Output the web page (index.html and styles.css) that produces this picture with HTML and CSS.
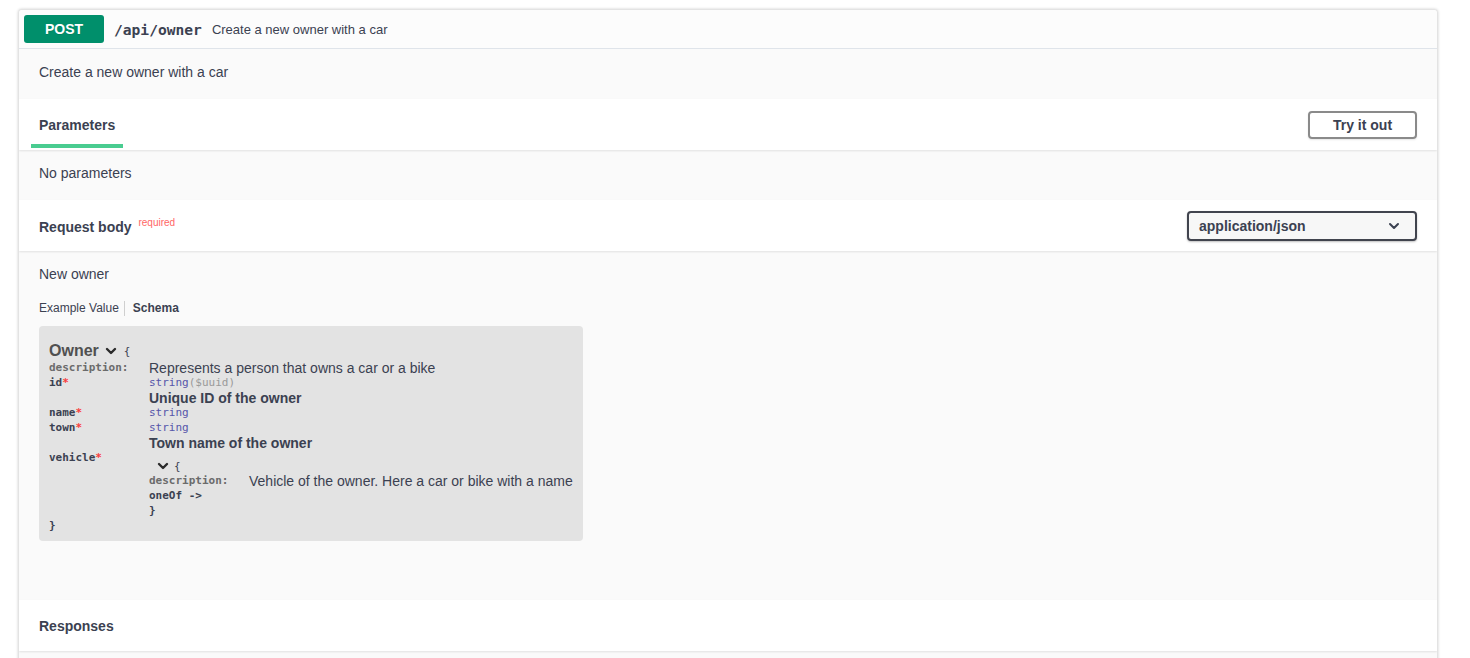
FILE: index.html
```html
<!DOCTYPE html>
<html lang="en">
<head>
<meta charset="utf-8">
<title>POST /api/owner</title>
<link rel="stylesheet" href="styles.css">
</head>
<body>
<div class="opblock">
  <div class="summary">
    <span class="method">POST</span>
    <span class="path">/api/owner</span>
    <span class="summary-desc">Create a new owner with a car</span>
  </div>

  <div class="section-body desc-wrap">
    <p>Create a new owner with a car</p>
  </div>

  <div class="section-header">
    <div class="tab-item">Parameters</div>
    <button class="btn-try">Try it out</button>
  </div>
  <div class="section-body params-body">
    <p>No parameters</p>
  </div>

  <div class="section-header">
    <div class="header-title">Request body <span class="required">required</span></div>
    <div class="select">
      <span>application/json</span>
      <svg class="select-chev" width="14" height="14" viewBox="0 0 14 14"><polyline points="3,5 7,9 11,5" fill="none" stroke="#3b4151" stroke-width="2" stroke-linecap="round" stroke-linejoin="round"/></svg>
    </div>
  </div>
  <div class="section-body request-body">
    <p class="body-desc">New owner</p>
    <div class="example-tabs">
      <span class="tab-link">Example Value</span>
      <span class="tab-sep"></span>
      <span class="tab-link active">Schema</span>
    </div>
    <div class="model-box">
      <div class="title-line">
        <span class="model-title">Owner</span>
        <svg class="chev" width="12" height="12" viewBox="0 0 12 12"><polyline points="2,4 6,8 10,4" fill="none" stroke="#2b2b2b" stroke-width="2.4" stroke-linecap="round" stroke-linejoin="round"/></svg>
        <span class="brace">{</span>
      </div>
      <div class="prop-row">
        <div class="prop-name muted">description:</div>
        <div class="prop-val"><div class="text">Represents a person that owns a car or a bike</div></div>
      </div>
      <div class="prop-row">
        <div class="prop-name">id<span class="star">*</span></div>
        <div class="prop-val">
          <div class="mono-line"><span class="type">string</span><span class="fmt">($uuid)</span></div>
          <div class="text strong">Unique ID of the owner</div>
        </div>
      </div>
      <div class="prop-row">
        <div class="prop-name">name<span class="star">*</span></div>
        <div class="prop-val"><div class="mono-line"><span class="type">string</span></div></div>
      </div>
      <div class="prop-row">
        <div class="prop-name">town<span class="star">*</span></div>
        <div class="prop-val">
          <div class="mono-line"><span class="type">string</span></div>
          <div class="text strong">Town name of the owner</div>
        </div>
      </div>
      <div class="prop-row">
        <div class="prop-name">vehicle<span class="star">*</span></div>
        <div class="prop-val nested">
          <div class="nested-title">
            <svg class="chev" width="12" height="12" viewBox="0 0 12 12"><polyline points="2,4 6,8 10,4" fill="none" stroke="#2b2b2b" stroke-width="2.4" stroke-linecap="round" stroke-linejoin="round"/></svg>
            <span class="brace">{</span>
          </div>
          <div class="prop-row">
            <div class="prop-name muted">description:</div>
            <div class="prop-val"><div class="text">Vehicle of the owner. Here a car or bike with a name</div></div>
          </div>
          <div class="mono-line">oneOf -&gt;</div>
          <div class="mono-line">}</div>
        </div>
      </div>
      <div class="mono-line close">}</div>
    </div>
  </div>

  <div class="section-header">
    <div class="header-title">Responses</div>
  </div>
  <div class="section-body tail"></div>
</div>
</body>
</html>
```

FILE: styles.css
```css
* { box-sizing: border-box; }

html, body {
  margin: 0;
  background: #fff;
}

body {
  padding: 9px 32px 0 18px;
  font-family: "Liberation Sans", Arial, sans-serif;
  color: #3b4151;
}

p { margin: 0; }

.opblock {
  border: 1px solid #e3e3e3;
  border-radius: 4px;
  box-shadow: 0 0 3px rgba(0, 0, 0, 0.19);
  background: #fafafa;
  overflow: hidden;
}

.summary {
  display: flex;
  align-items: center;
  padding: 5px;
  border-bottom: 1px solid #dfe4ea;
  background: #fcfcfc;
}

.method {
  min-width: 80px;
  height: 28px;
  display: flex;
  align-items: center;
  justify-content: center;
  background: #008f6b;
  color: #fff;
  font-weight: 700;
  font-size: 14px;
  border-radius: 3px;
  text-shadow: 0 1px 0 rgba(0, 0, 0, 0.1);
}

.path {
  font-family: "DejaVu Sans Mono", "Liberation Mono", monospace;
  font-weight: 700;
  font-size: 14.6px;
  color: #3b4151;
  padding: 0 10px;
}

.summary-desc {
  font-size: 13px;
  color: #3b4151;
}

.section-body {
  background: #fafafa;
  font-size: 14px;
  line-height: 17px;
}

.desc-wrap {
  padding: 15px 20px 18px;
}

.params-body {
  padding: 15px 20px 18px;
}

.section-header {
  display: flex;
  align-items: center;
  justify-content: space-between;
  height: 51px;
  padding: 0 20px 0 20px;
  background: #fff;
  box-shadow: 0 1px 2px rgba(0, 0, 0, 0.1);
  position: relative;
}

.section-header:has(.tab-item) {
  padding-left: 12px;
  align-items: stretch;
}

.tab-item {
  display: flex;
  align-items: center;
  padding: 7px 8px 0;
  margin-bottom: 2px;
  border-bottom: 4px solid #49cc90;
  font-size: 14px;
  font-weight: 700;
}

.btn-try {
  align-self: center;
  width: 109px;
  height: 28px;
  border: 2px solid #8a8a8a;
  border-radius: 4px;
  background: transparent;
  font-family: "Liberation Sans", Arial, sans-serif;
  font-size: 14px;
  font-weight: 700;
  color: #3b4151;
  box-shadow: 0 1px 2px rgba(0, 0, 0, 0.1);
}

.header-title {
  font-size: 14px;
  font-weight: 700;
}

.required {
  font-size: 10px;
  font-weight: 400;
  color: #ff6666;
  vertical-align: 6px;
  margin-left: 3px;
}

.select {
  width: 230px;
  height: 30px;
  display: flex;
  align-items: center;
  justify-content: space-between;
  padding: 0 14px 0 10px;
  border: 2px solid #41444e;
  border-radius: 4px;
  background: #f7f7f7;
  box-shadow: 0 1px 2px rgba(0, 0, 0, 0.25);
  font-size: 14px;
  font-weight: 700;
  color: #3b4151;
}

.request-body {
  padding: 15px 20px 59px;
}

.example-tabs {
  display: flex;
  align-items: center;
  margin-top: 18px;
  height: 15px;
  font-size: 12px;
}

.tab-sep {
  width: 1px;
  height: 15px;
  background: #cfcfcf;
  margin: 0 8px 0 5px;
}

.tab-link.active {
  font-weight: 700;
}

.model-box {
  margin-top: 10px;
  width: 544px;
  padding: 14px 10px 8px;
  background: #e3e3e3;
  border-radius: 4px;
}

.title-line {
  display: flex;
  align-items: center;
  height: 20px;
}

.model-title {
  font-size: 16px;
  font-weight: 700;
  color: #505050;
}

.chev {
  margin: 2px 0 0 6px;
}

.brace {
  font-family: "DejaVu Sans Mono", "Liberation Mono", monospace;
  font-size: 11px;
  margin-left: 7px;
  padding-top: 3px;
}

.prop-row {
  display: grid;
  grid-template-columns: 100px 1fr;
}

.prop-name {
  font-family: "DejaVu Sans Mono", "Liberation Mono", monospace;
  font-size: 11px;
  line-height: 15px;
  font-weight: 700;
  color: #3b4151;
}

.prop-name.muted {
  color: #6b6b6b;
}

.star {
  color: #f93e3e;
}

.mono-line {
  font-family: "DejaVu Sans Mono", "Liberation Mono", monospace;
  font-size: 11px;
  line-height: 15px;
  font-weight: 700;
  color: #3b4151;
}

.type {
  color: #5555aa;
  font-weight: 400;
}

.fmt {
  color: #9a9a9a;
  font-weight: 400;
}

.text {
  font-size: 14px;
  line-height: 15px;
  padding-top: 1px;
  margin-bottom: -1px;
  color: #3b4151;
}

.text.strong {
  font-weight: 700;
}

.nested {
  padding-top: 7px;
}

.nested-title {
  display: flex;
  align-items: center;
  height: 16px;
  padding-left: 2px;
}

.nested-title .brace {
  margin-left: 5px;
}

.close {
  line-height: 15px;
}

.tail {
  height: 10px;
}
```
